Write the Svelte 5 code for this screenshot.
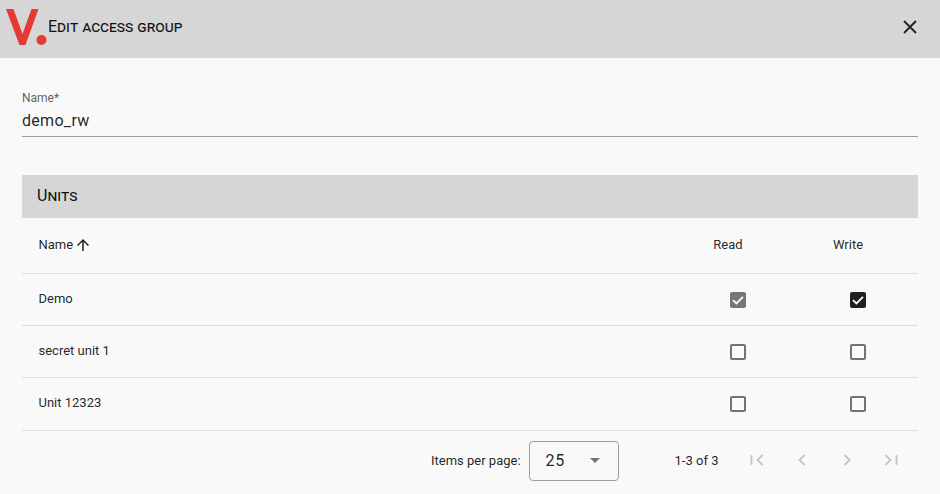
<script>
  const units = [
    { name: "Demo", read: "inherited", write: "on" },
    { name: "secret unit 1", read: "off", write: "off" },
    { name: "Unit 12323", read: "off", write: "off" }
  ];
</script>

<style>
  :global(body) {
    margin: 0;
    background: #f9f9f9;
    font-family: Roboto, sans-serif;
    color: rgba(0, 0, 0, 0.87);
    overflow: hidden;
  }
  .dialog {
    width: 940px;
    height: 494px;
    overflow: hidden;
    background: #f9f9f9;
  }
  .titlebar {
    height: 58px;
    background: #d6d6d6;
    display: flex;
    align-items: center;
    padding-left: 6px;
    padding-right: 20px;
    box-sizing: border-box;
  }
  .logo {
    width: 42px;
    height: 46px;
    flex: none;
    margin-top: -12px;
  }
  .title {
    flex: 1;
    font-size: 16px;
    font-weight: 400;
    font-variant: small-caps;
    margin-top: -5px;
    color: #111;
  }
  .close {
    width: 20px;
    height: 20px;
    display: block;
    margin-top: -4px;
  }
  .content {
    padding: 0 22px;
  }
  .field {
    padding-top: 33px;
    border-bottom: 1px solid #9e9e9e;
    height: 45px;
  }
  .field label {
    display: block;
    font-size: 12px;
    line-height: 14px;
    color: rgba(0, 0, 0, 0.65);
  }
  .field .value {
    font-size: 16px;
    line-height: 24px;
    margin-top: 4px;
    letter-spacing: 0.3px;
  }
  .section {
    margin-top: 38px;
    height: 43px;
    line-height: 42px;
    background: #d6d6d6;
    padding-left: 15px;
    font-size: 16px;
    font-weight: 400;
    font-variant: small-caps;
    color: #111;
  }
  .row {
    display: grid;
    grid-template-columns: 1fr 120px 120px 0;
    align-items: center;
    padding-left: 16.5px;
    padding-bottom: 2px;
    font-size: 13px;
    border-bottom: 1px solid #dcdcdc;
    box-sizing: border-box;
    height: 52.2px;
  }
  .head {
    height: 56px;
  }
  .head .center {
    padding-right: 20px;
  }
  .name {
    display: flex;
    align-items: center;
    gap: 1px;
  }
  .center {
    display: flex;
    justify-content: center;
  }
  .row .check {
    transform: translateY(1px);
  }
  .arrow {
    width: 18px;
    height: 18px;
  }
  .box {
    width: 16px;
    height: 16px;
    box-sizing: border-box;
    border: 2px solid rgba(0, 0, 0, 0.54);
    border-radius: 2px;
  }
  .box svg {
    display: block;
    width: 16px;
    height: 16px;
    margin: -2px;
  }
  .box.on {
    background: #212121;
    border-color: #212121;
  }
  .box.inherited {
    background: #757575;
    border-color: #757575;
  }
  .pager {
    display: flex;
    align-items: center;
    height: 60px;
    padding-left: 409px;
    font-size: 13px;
    white-space: nowrap;
  }
  .pager > * {
    flex: none;
  }
  .select {
    width: 90px;
    height: 40px;
    box-sizing: border-box;
    margin-left: 8px;
    border: 1px solid #9e9e9e;
    border-radius: 4px;
    display: flex;
    align-items: center;
    padding: 0 15px 0 16px;
    justify-content: space-between;
    font-size: 16px;
    letter-spacing: 0.6px;
  }
  .caret {
    width: 0;
    height: 0;
    border-left: 5px solid transparent;
    border-right: 5px solid transparent;
    border-top: 5px solid rgba(0, 0, 0, 0.54);
    margin-right: 3px;
  }
  .range {
    margin-left: 56px;
    width: 60.5px;
  }
  .nav {
    width: 44.7px;
    display: flex;
    justify-content: center;
  }
  .nav svg {
    width: 18px;
    height: 18px;
    display: block;
    margin-top: -2px;
  }
</style>

<div class="dialog">
  <div class="titlebar">
    <svg class="logo" viewBox="0 0 42 46">
      <path d="M0 9h7.500l9 25 9-25h7L19.500 45h-6z" fill="#e53935" />
      <circle cx="35.500" cy="40" r="5" fill="#e53935" />
    </svg>
    <div class="title">Edit access group</div>
    <svg class="close" viewBox="0 0 20 20">
      <path d="M4 4l12 12M16 4L4 16" stroke="#212121" stroke-width="1.800" fill="none" />
    </svg>
  </div>

  <div class="content">
    <div class="field">
      <label for="name">Name*</label>
      <div class="value" id="name">demo_rw</div>
    </div>

    <div class="section">Units</div>

    <div class="row head">
      <div class="name">
        Name
        <svg class="arrow" viewBox="0 0 24 24">
          <path d="M4 12l1.410 1.410L11 7.830V20h2V7.830l5.580 5.590L20 12l-8-8z" fill="#212121" />
        </svg>
      </div>
      <div class="center">Read</div>
      <div class="center">Write</div>
    </div>

    {#each units as unit}
      <div class="row">
        <div class="name">{unit.name}</div>
        <div class="center check">
          <div class="box {unit.read}">
            {#if unit.read !== "off"}
              <svg viewBox="0 0 16 16"><path d="M3 8.200l3.400 3.300L13 4.800" stroke="#fafafa" stroke-width="1.800" fill="none" /></svg>
            {/if}
          </div>
        </div>
        <div class="center check">
          <div class="box {unit.write}">
            {#if unit.write !== "off"}
              <svg viewBox="0 0 16 16"><path d="M3 8.200l3.400 3.300L13 4.800" stroke="#fafafa" stroke-width="1.800" fill="none" /></svg>
            {/if}
          </div>
        </div>
      </div>
    {/each}

    <div class="pager">
      <span>Items per page:</span>
      <div class="select">
        <span>25</span>
        <div class="caret"></div>
      </div>
      <span class="range">1-3 of 3</span>
      <div class="nav">
        <svg viewBox="0 0 18 18"><path d="M3.500 4v10M14.500 4L9.500 9l5 5" stroke="#c4c4c4" stroke-width="1.800" fill="none" /></svg>
      </div>
      <div class="nav">
        <svg viewBox="0 0 18 18"><path d="M11.500 4L6.500 9l5 5" stroke="#c4c4c4" stroke-width="1.800" fill="none" /></svg>
      </div>
      <div class="nav">
        <svg viewBox="0 0 18 18"><path d="M6.500 4l5 5-5 5" stroke="#c4c4c4" stroke-width="1.800" fill="none" /></svg>
      </div>
      <div class="nav">
        <svg viewBox="0 0 18 18"><path d="M14.500 4v10M3.500 4l5 5-5 5" stroke="#c4c4c4" stroke-width="1.800" fill="none" /></svg>
      </div>
    </div>
  </div>
</div>
